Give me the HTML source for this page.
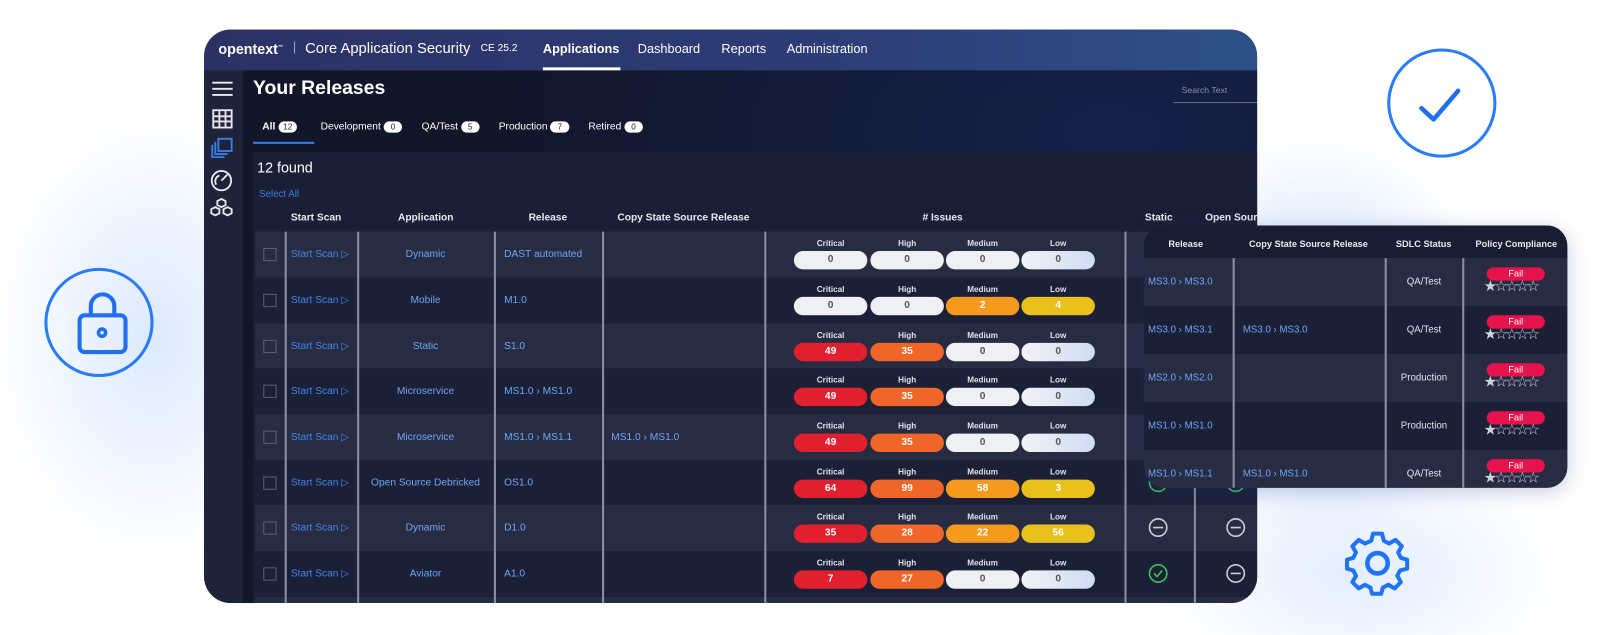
<!DOCTYPE html>
<html><head><meta charset="utf-8"><style>
*{margin:0;padding:0;box-sizing:border-box}
body{width:1600px;height:634px;overflow:hidden;position:relative;font-family:"Liberation Sans",sans-serif;background:#fff}
#all{position:absolute;left:0;top:0;width:1568px;height:622px;transform:scale(1.0204);transform-origin:0 0;
background:radial-gradient(ellipse 180px 200px at 1290px 330px,#c9dcff,rgba(255,255,255,0) 100%),radial-gradient(ellipse 160px 220px at 150px 330px,#dde9ff,rgba(255,255,255,0) 100%),radial-gradient(ellipse 200px 120px at 1330px 560px,#e3edff,rgba(255,255,255,0) 100%),#fff}
.a{position:absolute}
#p{left:200px;top:29px;width:1032px;height:562px;border-radius:26px;overflow:hidden;background:#151a2e}
#hd{left:0;top:0;width:1032px;height:40px;background:linear-gradient(90deg,#2b3163,#2d3d78 60%,#2e5088);color:#fff}
#hd span{position:absolute;top:12px;font-size:12.5px;white-space:nowrap}
#sb{left:0;top:40px;width:38px;height:522px;background:#1f2339}
#ct{left:38px;top:40px;width:994px;height:522px;background:radial-gradient(ellipse 600px 300px at 850px 60px,#16214a,rgba(0,0,0,0)),#121629}
#tb{left:48px;top:120px;width:984px;height:442px;background:#1b1f35}
.row{position:absolute;left:50px;width:982px;height:45px}
.l{background:#282c43}.d{background:#1c2036}
.row>*{position:absolute;white-space:nowrap}
.cb{left:8px;top:16px;width:13px;height:13px;border:1.5px solid #5a5f74}
.ss{left:35px;top:17px;font-size:10px;color:#3f86ec}
.ap{left:101px;width:132px;text-align:center;top:17px;font-size:10px;color:#6aa6f5}
.re{left:244px;top:17px;font-size:10px;color:#6aa6f5}
.cp{left:349px;top:17px;font-size:10px;color:#6aa6f5}
.lb{top:7px;width:72px;text-align:center;font-size:8px;font-weight:bold;color:#dfe2ea}
.pl{top:19px;width:72px;height:18px;border-radius:9px;text-align:center;font-size:10px;font-weight:bold;line-height:18px;color:#fff}
.w{background:#eef0f3;color:#555}.wl{background:linear-gradient(90deg,#f1f3f6,#cfdcf2);color:#555}
.r{background:#e0202e}.o{background:#f06628}.m{background:#f59a1d}.y{background:#e8c11c}
.vl{position:absolute;top:198px;width:1.5px;height:364px;background:#8c90a0}
.th{position:absolute;top:179px;font-size:10px;font-weight:bold;color:#e8eaf0;white-space:nowrap}
#ov{left:1121px;top:221px;width:415px;height:257px;border-radius:20px;overflow:hidden;background:#262a40;box-shadow:0 4px 20px rgba(30,60,140,.25)}
#ov .h{position:absolute;top:13px;font-size:9px;font-weight:bold;color:#e8eaf0;white-space:nowrap}
.or{position:absolute;left:0;width:415px;height:47px}
.or>*{position:absolute;font-size:9.5px;white-space:nowrap}
.bl{color:#6aa6f5}
.fl{left:336px;top:9px;width:57px;height:13px;border-radius:7px;background:#e5124b;color:#fff;text-align:center;font-size:9px;line-height:13px}
.st{left:333px;top:21px;font-size:14.5px !important;line-height:14px;color:#cfd2da;letter-spacing:-2.5px}
.sd{left:237px;width:75px;text-align:center;top:18px;color:#e0e2ea}
.ovl{position:absolute;top:32px;width:1.5px;height:225px;background:#8c90a0}
</style></head><body><div id="all">

<svg class="a" style="left:1359px;top:47px" width="110" height="110" viewBox="0 0 110 110"><circle cx="54" cy="54" r="52" fill="none" stroke="#2a7cf6" stroke-width="3"/><path d="M34 59 L46 70 L70 42" fill="none" stroke="#1f6ff0" stroke-width="4.5" stroke-linecap="round" stroke-linejoin="round"/></svg>
<svg class="a" style="left:43px;top:262px" width="110" height="110" viewBox="0 0 110 110"><circle cx="54" cy="54" r="52" fill="none" stroke="#2a7cf6" stroke-width="3"/><rect x="35" y="47" width="45" height="36" rx="5" fill="none" stroke="#1f6ff0" stroke-width="4"/><path d="M46 47 V38 a11.5 11.5 0 0 1 23 0 V47" fill="none" stroke="#1f6ff0" stroke-width="4"/><circle cx="57" cy="64" r="3.5" fill="none" stroke="#1f6ff0" stroke-width="3.5"/></svg>
<svg class="a" style="left:1314px;top:516px" width="72" height="72" viewBox="0 0 72 72"><g transform="translate(36 36)" fill="none" stroke="#1f74f5" stroke-width="4.5" stroke-linejoin="round"><path d="M-5 -30 H5 L7 -22 L13 -19 L20 -23 L27 -16 L23 -9 L26 -3 L33 -1 V9 L25 11 L22 17 L26 24 L19 31 L12 27 L6 30 L4 37 H-6 L-8 30 L-14 27 L-21 31 L-28 24 L-24 17 L-27 11 L-34 9 V-1 L-27 -3 L-24 -9 L-28 -16 L-21 -23 L-14 -19 L-7 -22 Z" transform="scale(.88) translate(0 -3)"/><circle r="10" cy="0"/></g></svg>

<div id="p" class="a">
<div id="hd" class="a">
<span style="left:14px;top:11px;font-size:14px;font-weight:bold">opentext<sup style="font-size:5px">™</sup></span>
<span style="left:87px;top:10px;color:#aab">|</span>
<span style="left:99px;top:11px;font-size:14.5px">Core Application Security</span>
<span style="left:271px;top:13px;font-size:10px">CE 25.2</span>
<span style="left:332px;font-weight:bold">Applications</span>
<span style="left:425px">Dashboard</span>
<span style="left:507px">Reports</span>
<span style="left:571px">Administration</span>
<div class="a" style="left:332px;top:37px;width:76px;height:3px;background:#fff"></div>
</div>
<div id="sb" class="a">
<svg class="a" style="left:6px;top:8px" width="26" height="140" viewBox="0 0 26 140" fill="none" stroke="#e8eaf0" stroke-width="1.8">
<path d="M2 4H22M2 10H22M2 16H22"/>
<rect x="3" y="31" width="18" height="17"/><path d="M9 31V48M15 31V48M3 37H21M3 42H21"/>
<g stroke="#3b7ee8"><rect x="8" y="59" width="13" height="12"/><path d="M5 62V74H17M2 65V77H14"/></g>
<circle cx="11" cy="100" r="9.5"/><path d="M11 100 L17 94 M6 104 a6 6 0 0 1 3-9"/>
<path d="M11 118 l4 2v4l-4 2l-4-2v-4z M5 126 l4 2v4l-4 2l-4-2v-4z M17 126 l4 2v4l-4 2l-4-2v-4z"/>
</svg>
</div>
<div id="ct" class="a"></div>
<div class="a" style="left:48px;top:47px;font-size:19px;font-weight:bold;color:#fff">Your Releases</div>
<div class="a" style="left:958px;top:54px;font-size:8.5px;color:#8a8ea0">Search Text</div>
<div class="a" style="left:950px;top:71px;width:82px;height:1px;background:#6a6e80"></div>
<div class="a" style="left:57px;top:90px;font-size:10px;color:#fff;white-space:nowrap">
<b>All</b> <span style="background:#fff;color:#222;border-radius:7px;padding:1px 5px;font-size:8px">12</span>
<span style="margin-left:20px">Development</span> <span style="background:#fff;color:#222;border-radius:7px;padding:1px 7px;font-size:8px">0</span>
<span style="margin-left:16px">QA/Test</span> <span style="background:#fff;color:#222;border-radius:7px;padding:1px 7px;font-size:8px">5</span>
<span style="margin-left:16px">Production</span> <span style="background:#fff;color:#222;border-radius:7px;padding:1px 7px;font-size:8px">7</span>
<span style="margin-left:16px">Retired</span> <span style="background:#fff;color:#222;border-radius:7px;padding:1px 7px;font-size:8px">0</span></div>
<div class="a" style="left:48px;top:110px;width:60px;height:2px;background:#3b7be0"></div>
<div id="tb" class="a"></div>
<div class="a" style="left:52px;top:127px;font-size:14px;color:#fff">12 found</div>
<div class="a" style="left:54px;top:156px;font-size:9.5px;color:#3b7be0">Select All</div>
<div class="th" style="left:85px">Start Scan</div>
<div class="th" style="left:190px">Application</div>
<div class="th" style="left:318px">Release</div>
<div class="th" style="left:405px">Copy State Source Release</div>
<div class="th" style="left:704px"># Issues</div>
<div class="th" style="left:922px">Static</div>
<div class="th" style="left:981px">Open Source</div>

<div class="row l" style="top:198px"><i class="cb"></i><span class="ss">Start Scan ▷</span><span class="ap">Dynamic</span><span class="re">DAST automated</span>
<b class="lb" style="left:528px">Critical</b><b class="lb" style="left:603px">High</b><b class="lb" style="left:677px">Medium</b><b class="lb" style="left:751px">Low</b>
<span class="pl w" style="left:528px">0</span><span class="pl w" style="left:603px">0</span><span class="pl w" style="left:677px">0</span><span class="pl wl" style="left:751px">0</span></div>
<div class="row d" style="top:243px"><i class="cb"></i><span class="ss">Start Scan ▷</span><span class="ap">Mobile</span><span class="re">M1.0</span>
<b class="lb" style="left:528px">Critical</b><b class="lb" style="left:603px">High</b><b class="lb" style="left:677px">Medium</b><b class="lb" style="left:751px">Low</b>
<span class="pl w" style="left:528px">0</span><span class="pl w" style="left:603px">0</span><span class="pl m" style="left:677px">2</span><span class="pl y" style="left:751px">4</span></div>
<div class="row l" style="top:288px"><i class="cb"></i><span class="ss">Start Scan ▷</span><span class="ap">Static</span><span class="re">S1.0</span>
<b class="lb" style="left:528px">Critical</b><b class="lb" style="left:603px">High</b><b class="lb" style="left:677px">Medium</b><b class="lb" style="left:751px">Low</b>
<span class="pl r" style="left:528px">49</span><span class="pl o" style="left:603px">35</span><span class="pl w" style="left:677px">0</span><span class="pl wl" style="left:751px">0</span></div>
<div class="row d" style="top:332px"><i class="cb"></i><span class="ss">Start Scan ▷</span><span class="ap">Microservice</span><span class="re">MS1.0 › MS1.0</span>
<b class="lb" style="left:528px">Critical</b><b class="lb" style="left:603px">High</b><b class="lb" style="left:677px">Medium</b><b class="lb" style="left:751px">Low</b>
<span class="pl r" style="left:528px">49</span><span class="pl o" style="left:603px">35</span><span class="pl w" style="left:677px">0</span><span class="pl wl" style="left:751px">0</span></div>
<div class="row l" style="top:377px"><i class="cb"></i><span class="ss">Start Scan ▷</span><span class="ap">Microservice</span><span class="re">MS1.0 › MS1.1</span><span class="cp">MS1.0 › MS1.0</span>
<b class="lb" style="left:528px">Critical</b><b class="lb" style="left:603px">High</b><b class="lb" style="left:677px">Medium</b><b class="lb" style="left:751px">Low</b>
<span class="pl r" style="left:528px">49</span><span class="pl o" style="left:603px">35</span><span class="pl w" style="left:677px">0</span><span class="pl wl" style="left:751px">0</span></div>
<div class="row d" style="top:422px"><i class="cb"></i><span class="ss">Start Scan ▷</span><span class="ap">Open Source Debricked</span><span class="re">OS1.0</span>
<b class="lb" style="left:528px">Critical</b><b class="lb" style="left:603px">High</b><b class="lb" style="left:677px">Medium</b><b class="lb" style="left:751px">Low</b>
<span class="pl r" style="left:528px">64</span><span class="pl o" style="left:603px">99</span><span class="pl m" style="left:677px">58</span><span class="pl y" style="left:751px">3</span>
<svg style="left:875px;top:12px" width="20" height="20"><circle cx="10" cy="10" r="8.5" fill="none" stroke="#3fbf5a" stroke-width="1.6"/><path d="M6 10l3 3l5-6" fill="none" stroke="#3fbf5a" stroke-width="1.6"/></svg>
<svg style="left:951px;top:12px" width="20" height="20"><circle cx="10" cy="10" r="8.5" fill="none" stroke="#3fbf5a" stroke-width="1.6"/></svg></div>
<div class="row l" style="top:466px"><i class="cb"></i><span class="ss">Start Scan ▷</span><span class="ap">Dynamic</span><span class="re">D1.0</span>
<b class="lb" style="left:528px">Critical</b><b class="lb" style="left:603px">High</b><b class="lb" style="left:677px">Medium</b><b class="lb" style="left:751px">Low</b>
<span class="pl r" style="left:528px">35</span><span class="pl o" style="left:603px">28</span><span class="pl m" style="left:677px">22</span><span class="pl y" style="left:751px">56</span>
<svg style="left:875px;top:12px" width="20" height="20"><circle cx="10" cy="10" r="8.5" fill="none" stroke="#c8ccd6" stroke-width="1.6"/><path d="M5 10h10" stroke="#c8ccd6" stroke-width="1.6"/></svg>
<svg style="left:951px;top:12px" width="20" height="20"><circle cx="10" cy="10" r="8.5" fill="none" stroke="#c8ccd6" stroke-width="1.6"/><path d="M5 10h10" stroke="#c8ccd6" stroke-width="1.6"/></svg></div>
<div class="row d" style="top:511px"><i class="cb"></i><span class="ss">Start Scan ▷</span><span class="ap">Aviator</span><span class="re">A1.0</span>
<b class="lb" style="left:528px">Critical</b><b class="lb" style="left:603px">High</b><b class="lb" style="left:677px">Medium</b><b class="lb" style="left:751px">Low</b>
<span class="pl r" style="left:528px">7</span><span class="pl o" style="left:603px">27</span><span class="pl w" style="left:677px">0</span><span class="pl wl" style="left:751px">0</span>
<svg style="left:875px;top:12px" width="20" height="20"><circle cx="10" cy="10" r="8.5" fill="none" stroke="#3fbf5a" stroke-width="1.6"/><path d="M6 10l3 3l5-6" fill="none" stroke="#3fbf5a" stroke-width="1.6"/></svg>
<svg style="left:951px;top:12px" width="20" height="20"><circle cx="10" cy="10" r="8.5" fill="none" stroke="#c8ccd6" stroke-width="1.6"/><path d="M5 10h10" stroke="#c8ccd6" stroke-width="1.6"/></svg></div>
<div class="row l" style="top:556px"></div>
<i class="vl" style="left:79px"></i><i class="vl" style="left:150px"></i><i class="vl" style="left:284px"></i><i class="vl" style="left:390px"></i><i class="vl" style="left:549px"></i><i class="vl" style="left:902px"></i><i class="vl" style="left:970px"></i>
</div>

<div id="ov" class="a">
<div class="a" style="left:0;top:0;width:415px;height:32px;background:#191d31"></div>
<span class="h" style="left:24px">Release</span><span class="h" style="left:103px">Copy State Source Release</span><span class="h" style="left:247px">SDLC Status</span><span class="h" style="left:325px">Policy Compliance</span>
<div class="or" style="top:32px;background:#282c43"><span class="bl" style="left:4px;top:18px">MS3.0 › MS3.0</span><span class="sd">QA/Test</span><span class="fl">Fail</span><span class="st">★☆☆☆☆</span></div>
<div class="or" style="top:79px;background:#1c2036"><span class="bl" style="left:4px;top:18px">MS3.0 › MS3.1</span><span class="bl" style="left:97px;top:18px">MS3.0 › MS3.0</span><span class="sd">QA/Test</span><span class="fl">Fail</span><span class="st">★☆☆☆☆</span></div>
<div class="or" style="top:126px;background:#282c43"><span class="bl" style="left:4px;top:18px">MS2.0 › MS2.0</span><span class="sd">Production</span><span class="fl">Fail</span><span class="st">★☆☆☆☆</span></div>
<div class="or" style="top:173px;background:#1c2036"><span class="bl" style="left:4px;top:18px">MS1.0 › MS1.0</span><span class="sd">Production</span><span class="fl">Fail</span><span class="st">★☆☆☆☆</span></div>
<div class="or" style="top:220px;background:#282c43"><span class="bl" style="left:4px;top:18px">MS1.0 › MS1.1</span><span class="bl" style="left:97px;top:18px">MS1.0 › MS1.0</span><span class="sd">QA/Test</span><span class="fl">Fail</span><span class="st">★☆☆☆☆</span></div>
<i class="ovl" style="left:87px"></i><i class="ovl" style="left:236px"></i><i class="ovl" style="left:312px"></i>
</div>
</div></body></html>
